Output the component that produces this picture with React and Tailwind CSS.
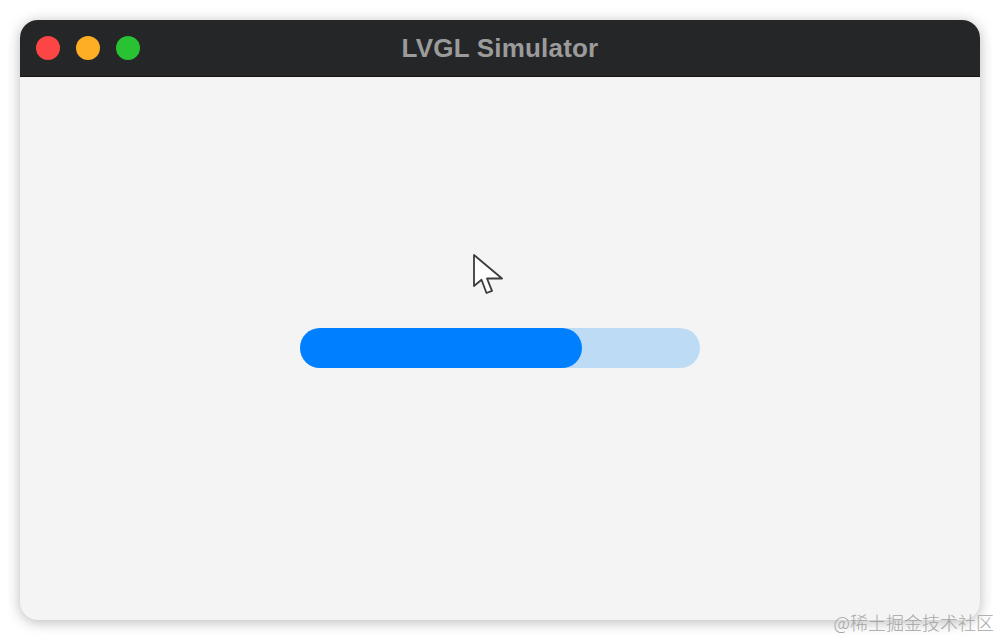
export default function App() {
  return (
    <div className="relative w-[1000px] h-[640px] bg-white p-[20px] font-['Liberation_Sans',Arial,sans-serif]">
      <div className="w-[960px] h-[600px] rounded-[18px] overflow-hidden bg-[#f4f4f4] shadow-[0_2px_14px_rgba(0,0,0,0.28)] flex flex-col">
        <div className="relative h-[57px] bg-[#252627] border-b border-[#151515] flex items-center px-[16px]">
          <div className="flex gap-[16px]">
            <span className="w-[24px] h-[24px] rounded-full bg-[#fc4646]" />
            <span className="w-[24px] h-[24px] rounded-full bg-[#fdae24]" />
            <span className="w-[24px] h-[24px] rounded-full bg-[#29c232]" />
          </div>
          <div className="absolute inset-0 flex items-center justify-center text-[26px] font-bold text-[#9b9b9b] tracking-[0.2px]">
            LVGL Simulator
          </div>
        </div>
        <div className="relative flex-1 flex flex-col items-center pt-[251px]">
          <svg
            className="absolute left-[452px] top-[176px]"
            width="34"
            height="45"
            viewBox="0 0 34 45"
          >
            <path
              d="M2 2 V33 L9.5 26.8 L14.5 40 L20 37.8 L15 25.5 H30 Z"
              fill="#ffffff"
              stroke="#3c3c3c"
              strokeWidth="1.8"
              strokeLinejoin="round"
            />
          </svg>
          <div className="w-[400px] h-[40px] rounded-full bg-[#bedbf5] flex">
            <div className="w-[282px] h-full rounded-full bg-[#0080ff]" />
          </div>
        </div>
      </div>
      <div className="absolute right-[6px] bottom-[6px] text-[18px] leading-[24px] text-[#a5a5a5] font-['Noto_Sans_CJK_SC',sans-serif] font-light">
        @稀土掘金技术社区
      </div>
    </div>
  );
}
